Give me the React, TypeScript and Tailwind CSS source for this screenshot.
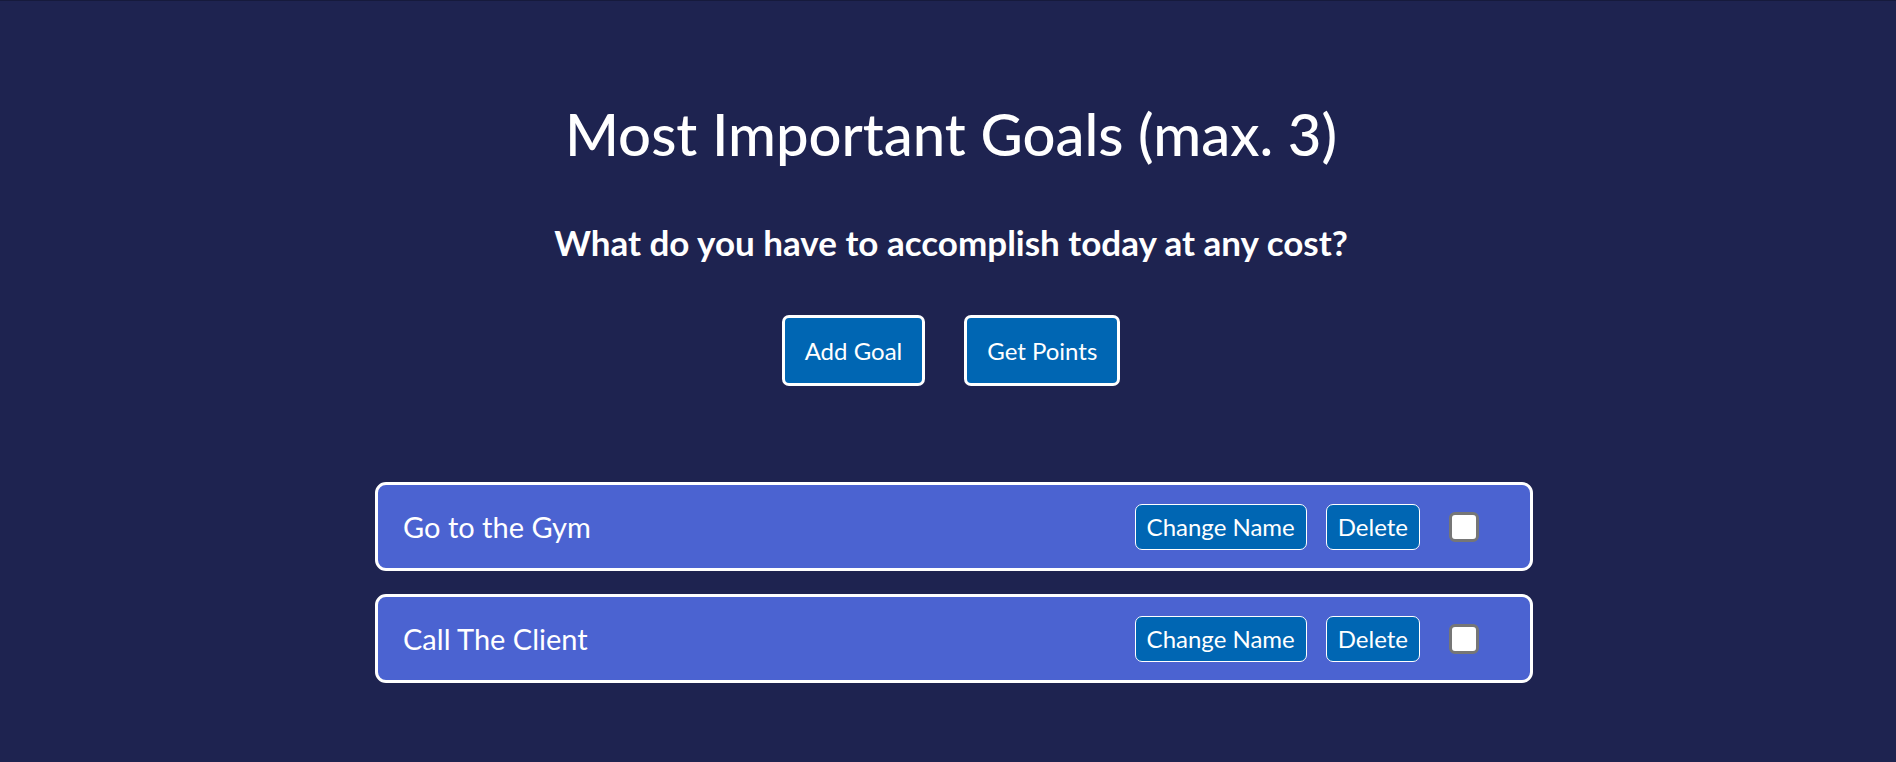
import { useState } from 'react';

interface Goal {
  id: number;
  name: string;
  done: boolean;
}

const initialGoals: Goal[] = [
  { id: 1, name: 'Go to the Gym', done: false },
  { id: 2, name: 'Call The Client', done: false },
];

export default function App() {
  const [goals, setGoals] = useState<Goal[]>(initialGoals);

  const toggleGoal = (id: number) => {
    setGoals(goals.map(g => (g.id === id ? { ...g, done: !g.done } : g)));
  };

  return (
    <div className="min-h-[762px] bg-[#1e2350] border-t border-[#161a3c] text-white font-['Lato',sans-serif] pl-[6px]">
      <div className="flex flex-col items-center pt-[97px]">
        <h1 className="text-[58px] leading-[72px] font-medium">Most Important Goals (max. 3)</h1>
        <p className="mt-[50px] text-[35px] leading-[44px] font-bold">What do you have to accomplish today at any cost?</p>

        {/* Main actions */}
        <div className="flex gap-[39px] mt-[51px]">
          <button className="h-[71px] px-[20px] bg-[#0066b3] border-[3px] border-white rounded-[7px] text-[24px]">
            Add Goal
          </button>
          <button className="h-[71px] px-[20px] bg-[#0066b3] border-[3px] border-white rounded-[7px] text-[24px]">
            Get Points
          </button>
        </div>

        {/* Goal list */}
        <div className="flex flex-col gap-[23px] mt-[96px] w-[1158px] ml-[6px]">
          {goals.map(goal => (
            <div
              key={goal.id}
              className="h-[89px] flex items-center bg-[#4b63d1] border-[3px] border-white rounded-[11px] pl-[25px] pr-[51px]"
            >
              <span className="flex-1 text-[29px]">{goal.name}</span>
              <button className="h-[46px] px-[11px] bg-[#0066b3] border border-white rounded-[7px] text-[24px]">
                Change Name
              </button>
              <button className="h-[46px] px-[11px] ml-[19px] bg-[#0066b3] border border-white rounded-[7px] text-[24px]">
                Delete
              </button>
              <input
                type="checkbox"
                checked={goal.done}
                onChange={() => toggleGoal(goal.id)}
                className="ml-[29px] w-[30px] h-[30px] appearance-none bg-white border-[3px] border-[#767676] rounded-[6px]"
              />
            </div>
          ))}
        </div>
      </div>
    </div>
  );
}
